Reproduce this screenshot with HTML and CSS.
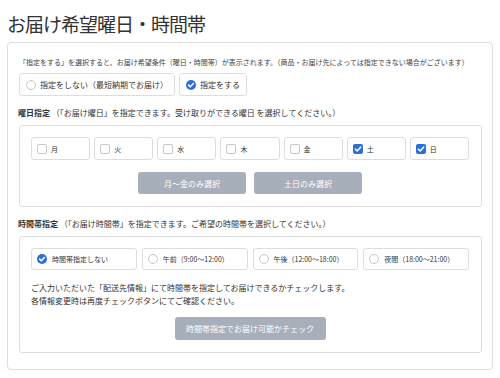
FILE: index.html
```html
<!DOCTYPE html>
<html lang="ja">
  <head>
    <meta charset="UTF-8" />
    <meta name="viewport" content="width=device-width, initial-scale=1.0" />
    <title>お届け希望曜日・時間帯</title>
    <link rel="stylesheet" href="styles.css">
  </head>
  <body>
    <h1>お届け希望曜日・時間帯</h1>

    <div class="card">
      <p class="note">「指定をする」を選択すると、お届け希望条件（曜日・時間帯）が表示されます。（商品・お届け先によっては指定できない場合がございます）</p>

      <div class="choice-row">
        <label class="option option-wide">
          <span class="radio"></span>指定をしない（最短納期でお届け）
        </label>
        <label class="option">
          <span class="radio checked">
            <svg viewBox="0 0 10 10"><path d="M2.6 5.1 L4.3 6.8 L7.4 3.5" /></svg>
          </span>指定をする
        </label>
      </div>

      <h2 class="section-title"><strong>曜日指定</strong> （「お届け曜日」を指定できます。受け取りができる曜日 を選択してください。）</h2>
      <div class="panel">
        <div class="day-grid">
          <label class="option small"><span class="box"></span>月</label>
          <label class="option small"><span class="box"></span>火</label>
          <label class="option small"><span class="box"></span>水</label>
          <label class="option small"><span class="box"></span>木</label>
          <label class="option small"><span class="box"></span>金</label>
          <label class="option small">
            <span class="box checked"><svg viewBox="0 0 10 10"><path d="M2.4 5.2 L4.2 7 L7.6 3.2" /></svg></span>土
          </label>
          <label class="option small">
            <span class="box checked"><svg viewBox="0 0 10 10"><path d="M2.4 5.2 L4.2 7 L7.6 3.2" /></svg></span>日
          </label>
        </div>
        <div class="button-row">
          <button type="button" class="gray-button">月〜金のみ選択</button>
          <button type="button" class="gray-button">土日のみ選択</button>
        </div>
      </div>

      <h2 class="section-title"><strong>時間帯指定</strong> （「お届け時間帯」を指定できます。ご希望の時間帯を選択してください。）</h2>
      <div class="panel">
        <div class="time-grid">
          <label class="option small time">
            <span class="radio checked"><svg viewBox="0 0 10 10"><path d="M2.6 5.1 L4.3 6.8 L7.4 3.5" /></svg></span>時間帯指定しない
          </label>
          <label class="option small time"><span class="radio"></span>午前（9:00〜12:00）</label>
          <label class="option small time"><span class="radio"></span>午後（12:00〜18:00）</label>
          <label class="option small time"><span class="radio"></span>夜間（18:00〜21:00）</label>
        </div>
        <p class="info">
          ご入力いただいた「配送先情報」にて時間帯を指定してお届けできるかチェックします。<br />
          各情報変更時は再度チェックボタンにてご確認ください。
        </p>
        <div class="button-row">
          <button type="button" class="gray-button check-button">時間帯指定でお届け可能かチェック</button>
        </div>
      </div>
    </div>
  </body>
</html>
```

FILE: styles.css
```css
body {
  font-family: "Noto Sans CJK JP", "Noto Sans", sans-serif;
  color: #333;
  background: #fff;
  margin: 0;
  padding: 9px 7px 0;
}

h1 {
  font-size: 19px;
  font-weight: 400;
  line-height: 30px;
  letter-spacing: -1px;
  margin: 0 0 3px;
  color: #333;
}

.card {
  border: 1px solid #ddd;
  border-radius: 4px;
  padding: 14px 10px 16px 11px;
}

.note {
  font-size: 7px;
  line-height: 10px;
  margin: 0 0 6px;
  color: #444;
}

.choice-row {
  display: flex;
  gap: 4px;
}

.option {
  display: flex;
  align-items: center;
  gap: 4px;
  height: 23px;
  box-sizing: border-box;
  border: 1px solid #ddd;
  border-radius: 3px;
  padding: 0 6px;
  font-size: 8px;
  color: #333;
  background: #fff;
}

.option-wide {
  width: 156px;
}

.option.small {
  font-size: 7px;
  padding-left: 5px;
}

.radio {
  width: 10px;
  height: 10px;
  box-sizing: border-box;
  border: 1px solid #c8c8c8;
  border-radius: 50%;
  display: flex;
  flex-shrink: 0;
}

.radio.checked,
.box.checked {
  background: #2a6fdb;
  border-color: #2a6fdb;
}

.radio svg,
.box svg {
  width: 100%;
  height: 100%;
}

.radio path,
.box path {
  fill: none;
  stroke: #fff;
  stroke-width: 1.6;
  stroke-linecap: round;
  stroke-linejoin: round;
}

.radio.checked {
  border: none;
}

.box {
  width: 10px;
  height: 10px;
  box-sizing: border-box;
  border: 1px solid #c8c8c8;
  border-radius: 2px;
  display: flex;
  flex-shrink: 0;
}

.box.checked {
  border: none;
}

.section-title {
  font-size: 8px;
  font-weight: 400;
  line-height: 12px;
  margin: 11px 0 6px -1px;
  color: #333;
}

.section-title strong {
  font-weight: 700;
}

.panel {
  border: 1px solid #ddd;
  border-radius: 3px;
  padding: 11px 12px 12px 11px;
}

.day-grid {
  display: grid;
  grid-template-columns: repeat(7, 1fr);
  gap: 4px;
}

.time-grid {
  display: grid;
  grid-template-columns: repeat(4, 1fr);
  gap: 5px;
}

.option.time {
  height: 22px;
  gap: 5px;
}

.button-row {
  display: flex;
  justify-content: center;
  gap: 8px;
  margin-top: 12px;
}

.gray-button {
  font-family: inherit;
  font-size: 8px;
  color: #fff;
  background: #a7afbb;
  border: none;
  border-radius: 3px;
  width: 108px;
  height: 22px;
  padding: 0;
}

.check-button {
  width: 151px;
  height: 23px;
}

.info {
  font-size: 8px;
  line-height: 13px;
  margin: 11px 0 0;
  color: #333;
}

.info + .button-row {
  margin-top: 10px;
}
```
